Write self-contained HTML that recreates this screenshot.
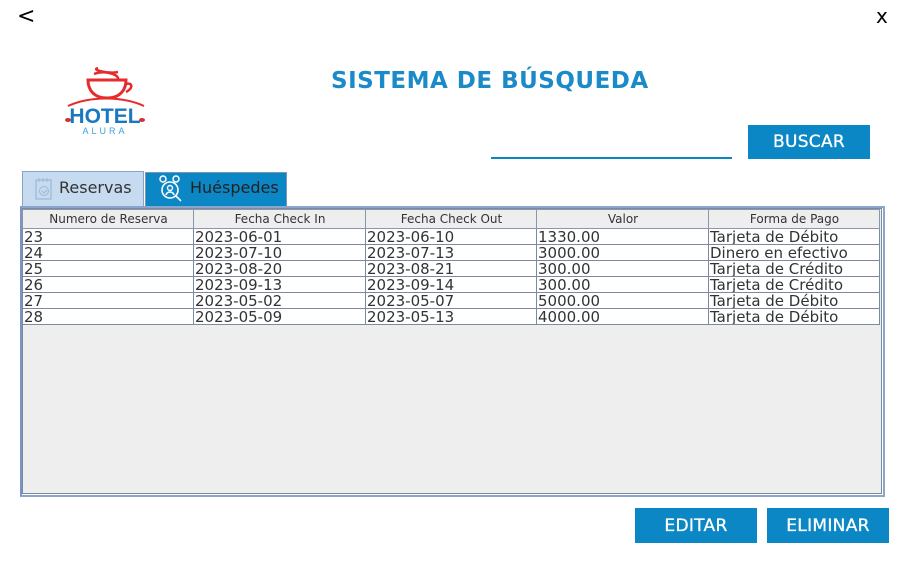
<!DOCTYPE html>
<html><head><meta charset="utf-8"><style>
*{margin:0;padding:0;box-sizing:border-box}
body{width:910px;height:571px;background:#fff;position:relative;overflow:hidden;font-family:"DejaVu Sans","Liberation Sans",sans-serif}
.abs{position:absolute}
.btn{position:absolute;background:#0b87c6;color:#fff;font-size:17px;display:flex;align-items:center;justify-content:center;letter-spacing:.3px;-webkit-text-stroke:.3px #fff}
table{border-collapse:collapse;position:absolute;left:22px;top:209px;table-layout:fixed}
td,th{border:1px solid #7a8aa3;height:16px;padding:0 0 0 1px;overflow:hidden;white-space:nowrap}
th{background:#eeeeee;font-weight:normal;font-size:12px;color:#333;height:19px;border-color:#8a97aa}
td{font-size:15px;color:#333;line-height:14px;background:#fff}
</style></head><body>
<div class="abs" style="left:17px;top:4px;font-size:22px">&lt;</div>
<div class="abs" style="left:876px;top:4px;font-size:20px">x</div>
<svg class="abs" style="left:60px;top:62px" width="90" height="75" viewBox="0 0 90 75">
<path d="M38 6c-8 2 12 6 20 4M34 12c10-4 26 0 24 6" stroke="#e52b2b" stroke-width="2.5" fill="none"/>
<path d="M28 18h38c0 10-6 18-19 18S28 28 28 18z" stroke="#e52b2b" stroke-width="3" fill="none"/>
<path d="M66 22c6-2 8 4 0 8" stroke="#e52b2b" stroke-width="2.5" fill="none"/>
<path d="M8 44c22-10 54-10 76 0" stroke="#e52b2b" stroke-width="2" fill="none"/>
<text x="45" y="61" text-anchor="middle" font-family="Liberation Sans" font-weight="bold" font-size="21" fill="#1a78c2">HOTEL</text>
<text x="45" y="72" text-anchor="middle" font-family="Liberation Sans" font-size="9" letter-spacing="3" fill="#3aa3dc">ALURA</text>
<ellipse cx="8" cy="58" rx="3" ry="2" fill="#c33"/><ellipse cx="82" cy="58" rx="3" ry="2" fill="#c33"/>
</svg>
<div class="abs" style="left:331px;top:68px;font-size:23px;font-weight:bold;color:#1a8bc8;letter-spacing:.5px">SISTEMA DE BÚSQUEDA</div>
<div class="abs" style="left:491px;top:157px;width:241px;height:2px;background:#0b87c6"></div>
<div class="btn" style="left:748px;top:125px;width:122px;height:34px">BUSCAR</div>
<div class="abs" style="left:22px;top:171px;width:122px;height:37px;background:#c6dbf0;border:1px solid #8aa2c4;border-bottom:none"></div>
<svg class="abs" style="left:34px;top:176px" width="20" height="26" viewBox="0 0 20 26"><rect x="2" y="4" width="15" height="19" fill="none" stroke="#9db7d6" stroke-width="1.2"/><path d="M5 2v4M9 2v4M13 2v4" stroke="#9db7d6"/><circle cx="10" cy="15" r="4.5" fill="none" stroke="#9db7d6"/><path d="M8 15l2 2 3-3" stroke="#9db7d6" fill="none"/></svg>
<div class="abs" style="left:59px;top:178px;font-size:16px;color:#333">Reservas</div>
<div class="abs" style="left:145px;top:172px;width:142px;height:34px;background:#0b87c6;border:1px solid #7a95b8;border-bottom:none"></div>
<svg class="abs" style="left:156px;top:174px" width="30" height="30" viewBox="0 0 30 30"><circle cx="7" cy="5" r="3" fill="none" stroke="#fff" stroke-width="1.5"/><circle cx="20" cy="5" r="3" fill="none" stroke="#fff" stroke-width="1.5"/><circle cx="14" cy="16" r="8" fill="none" stroke="#fff" stroke-width="1.6"/><circle cx="14" cy="14" r="2.5" fill="none" stroke="#fff" stroke-width="1.4"/><path d="M10 21c1-4 7-4 8 0M20 22l5 5" stroke="#fff" stroke-width="1.6" fill="none"/></svg>
<div class="abs" style="left:190px;top:178px;font-size:16px;color:#222">Huéspedes</div>
<div class="abs" style="left:20px;top:206px;width:865px;height:291px;border:2px solid #8aa6cc;border-left-color:#7a95c0"></div>
<div class="abs" style="left:22px;top:208px;width:860px;height:286px;background:#eeeeee;border:1px solid #7a8aa3"></div>
<table><colgroup><col style="width:171px"><col style="width:172px"><col style="width:171px"><col style="width:172px"><col style="width:171px"></colgroup>
<tr><th>Numero de Reserva</th><th>Fecha Check In</th><th>Fecha Check Out</th><th>Valor</th><th>Forma de Pago</th></tr>
<tr><td>23</td><td>2023-06-01</td><td>2023-06-10</td><td>1330.00</td><td>Tarjeta de Débito</td></tr>
<tr><td>24</td><td>2023-07-10</td><td>2023-07-13</td><td>3000.00</td><td>Dinero en efectivo</td></tr>
<tr><td>25</td><td>2023-08-20</td><td>2023-08-21</td><td>300.00</td><td>Tarjeta de Crédito</td></tr>
<tr><td>26</td><td>2023-09-13</td><td>2023-09-14</td><td>300.00</td><td>Tarjeta de Crédito</td></tr>
<tr><td>27</td><td>2023-05-02</td><td>2023-05-07</td><td>5000.00</td><td>Tarjeta de Débito</td></tr>
<tr><td>28</td><td>2023-05-09</td><td>2023-05-13</td><td>4000.00</td><td>Tarjeta de Débito</td></tr>
</table>
<div class="btn" style="left:635px;top:508px;width:122px;height:35px">EDITAR</div>
<div class="btn" style="left:767px;top:508px;width:122px;height:35px">ELIMINAR</div>
</body></html>
